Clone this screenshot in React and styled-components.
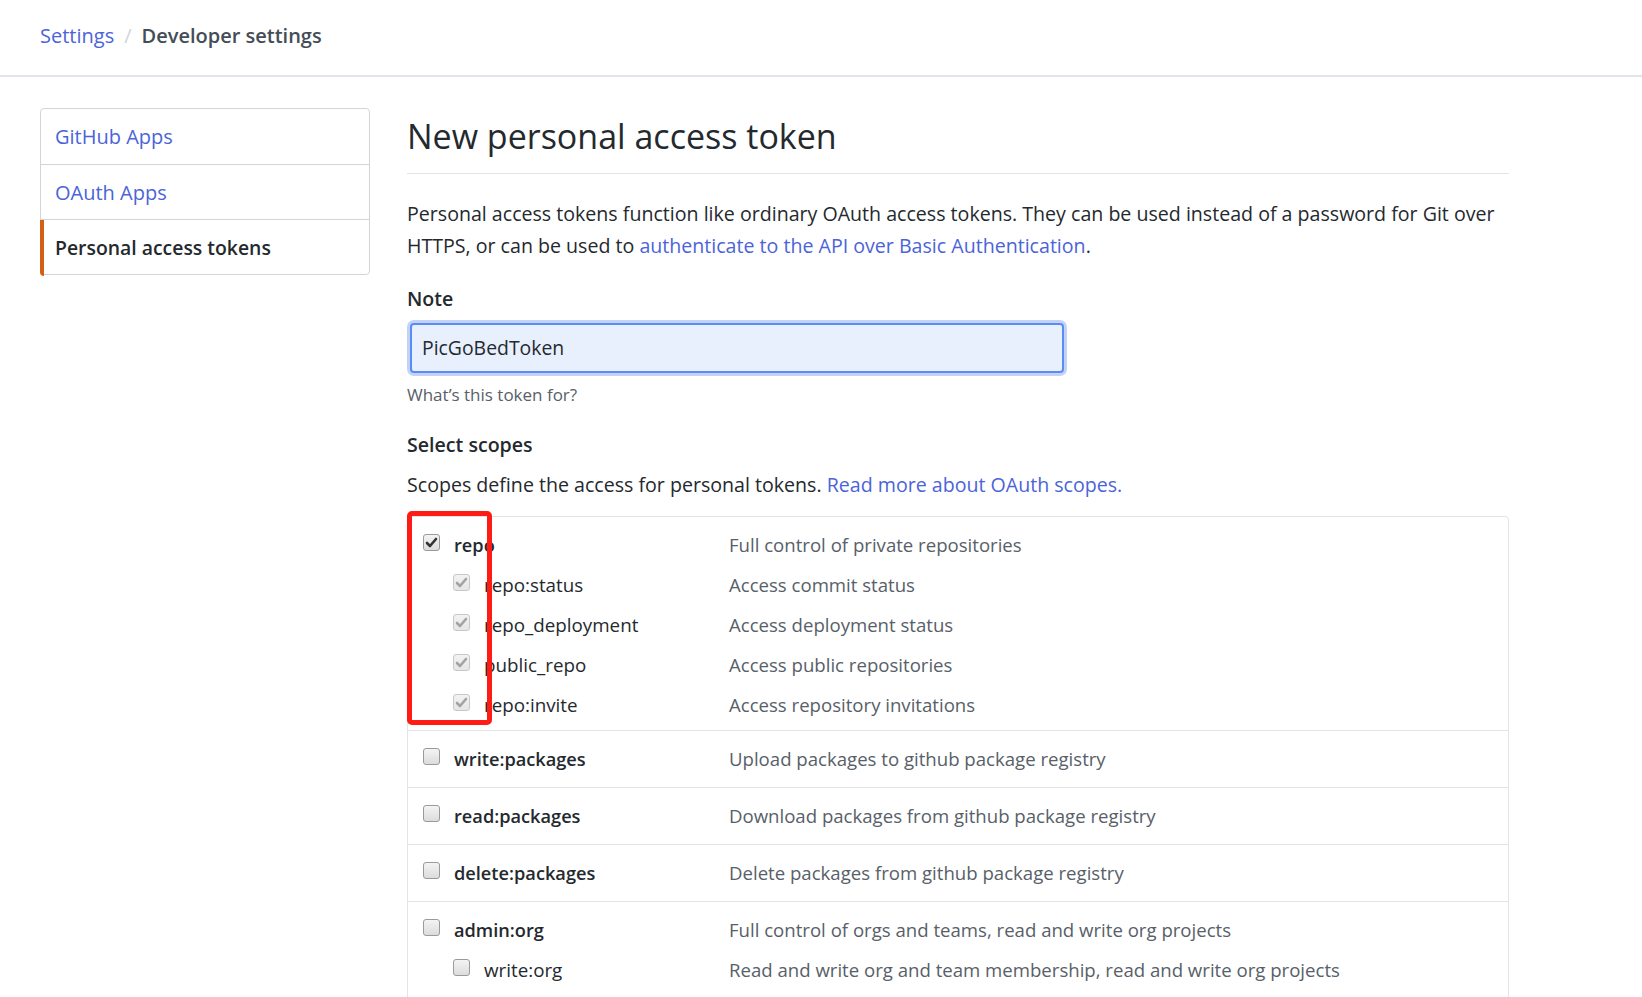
import styled, { createGlobalStyle } from 'styled-components'

const GlobalStyle = createGlobalStyle`
    body {
        margin: 0;
        background: #fff;
        color: #24292e;
        font-family: "Open Sans", "Noto Sans", "Liberation Sans", sans-serif;
        font-size: 19.6px;
    }
    * { box-sizing: border-box; }
`

const Header = styled.header`
    height: 77px;
    border-bottom: 2px solid #e1e4e8;
    display: flex;
    align-items: center;
    padding: 0 40px 4px;
    font-size: 20px;
`

const Crumb = styled.a`
    color: ${p => (p.current ? '#444d56' : '#4b64d9')};
    font-weight: ${p => (p.current ? 600 : 400)};
    text-decoration: none;
`

const Slash = styled.span`
    color: #d1d5da;
    margin: 0 10px;
`

const Page = styled.div`
    display: flex;
    align-items: flex-start;
    gap: 37px;
    padding: 31px 40px 0;
`

const Menu = styled.nav`
    width: 330px;
    flex: none;
    border: 1.5px solid #d1d5da;
    border-radius: 4px;
`

const MenuItem = styled.a`
    position: relative;
    display: flex;
    align-items: center;
    height: 55px;
    padding-left: 14px;
    font-size: ${p => (p.selected ? 19.4 : 20)}px;
    text-decoration: none;
    color: ${p => (p.selected ? '#24292e' : '#4b64d9')};
    font-weight: ${p => (p.selected ? 600 : 400)};
    & + & { border-top: 1.5px solid #d1d5da; }

    &::before {
        content: '';
        display: ${p => (p.selected ? 'block' : 'none')};
        position: absolute;
        left: -1.5px;
        top: 0;
        bottom: -1.5px;
        width: 4px;
        background: #d35f13;
        border-bottom-left-radius: 4px;
    }
`

const Main = styled.main`
    width: 1102px;
    flex: none;
`

const Title = styled.h2`
    margin: 0 0 24px;
    font-size: 34px;
    font-weight: 400;
    line-height: 56px;
    padding-bottom: 9px;
    border-bottom: 1.5px solid #e1e4e8;
`

const Text = styled.p`
    margin: 0;
    line-height: 31.5px;
    margin-top: ${p => p.top || 0}px;
`

const Link = styled.a`
    color: #4b64d9;
    text-decoration: none;
`

const Label = styled.label`
    display: block;
    margin-top: ${p => p.top || 0}px;
    font-weight: 600;
    line-height: 31.5px;
`

const Input = styled.input`
    display: block;
    width: 654px;
    height: 50px;
    margin: 8px 0 0 3px;
    padding: 0 10px;
    font-family: inherit;
    font-size: 19.4px;
    color: #24292e;
    background: #e8f0fe;
    border: 2px solid #5a8cf5;
    border-radius: 4px;
    box-shadow: 0 0 0 3px #c4d2f5;
    outline: none;
`

const Note = styled.p`
    margin: 8px 0 0;
    font-size: 17px;
    line-height: 27px;
    color: #586069;
`

const Scopes = styled.div`
    position: relative;
    margin-top: 15px;
    border: 1.5px solid #e1e4e8;
    border-radius: 4px;
    font-size: 18.6px;
`

const Group = styled.div`
    padding: ${p => (p.nested ? '8px 0 5px' : '8px 0')};
    & + & { border-top: 1.5px solid #e1e4e8; }
`

const Row = styled.div`
    display: grid;
    grid-template-columns: 321px 1fr;
    align-items: center;
    height: 40px;
`

const NameCell = styled.div`
    display: flex;
    align-items: center;
    gap: 14px;
    padding-left: ${p => (p.sub ? 45 : 15)}px;
    font-weight: ${p => (p.sub ? 400 : 600)};
    font-size: ${p => (p.sub ? 18.8 : 18.2)}px;
`

const Desc = styled.span`
    color: #586069;
`

const Box = styled.span`
    width: 17px;
    height: 17px;
    flex: none;
    margin-top: -5px;
    display: flex;
    align-items: center;
    justify-content: center;
    border-radius: 3px;
    border: 1px solid ${p => (p.disabled ? '#c8c8c8' : '#9a9a9a')};
    background: ${p => (p.disabled
        ? 'linear-gradient(#f2f2f2, #e6e6e6)'
        : 'linear-gradient(#f4f4f4, #dcdcdc)')};
    color: ${p => (p.disabled ? '#a3a3a3' : '#333')};
`

const Highlight = styled.div`
    position: absolute;
    left: -1.5px;
    top: -5.5px;
    width: 85px;
    height: 214px;
    border: 5px solid #ff1c14;
    border-radius: 5px;
    pointer-events: none;
`

function CheckBox({ checked, disabled }) {
    return (
        <Box disabled={disabled}>
            {checked && (
                <svg width="13" height="13" viewBox="0 0 13 13">
                    <path d="M2 7 L5 10 L11 3" fill="none" stroke="currentColor" strokeWidth="2.6" strokeLinecap="round" strokeLinejoin="round" />
                </svg>
            )}
        </Box>
    )
}

const groups = [
    {
        name: 'repo', desc: 'Full control of private repositories', checked: true,
        children: [
            ['repo:status', 'Access commit status'],
            ['repo_deployment', 'Access deployment status'],
            ['public_repo', 'Access public repositories'],
            ['repo:invite', 'Access repository invitations'],
        ],
    },
    { name: 'write:packages', desc: 'Upload packages to github package registry' },
    { name: 'read:packages', desc: 'Download packages from github package registry' },
    { name: 'delete:packages', desc: 'Delete packages from github package registry' },
    {
        name: 'admin:org', desc: 'Full control of orgs and teams, read and write org projects',
        children: [
            ['write:org', 'Read and write org and team membership, read and write org projects'],
            ['read:org', 'Read org and team membership, read org projects'],
        ],
    },
]

function ScopeGroup({ group }) {
    const children = group.children || []
    return (
        <Group nested={children.length > 0}>
            <Row>
                <NameCell>
                    <CheckBox checked={group.checked} />
                    {group.name}
                </NameCell>
                <Desc>{group.desc}</Desc>
            </Row>
            {children.map(([name, desc]) => (
                <Row key={name}>
                    <NameCell sub>
                        <CheckBox checked={group.checked} disabled={group.checked} />
                        {name}
                    </NameCell>
                    <Desc>{desc}</Desc>
                </Row>
            ))}
        </Group>
    )
}

export default function App() {
    return (
        <>
            <GlobalStyle />
            <Header>
                <Crumb href="#">Settings</Crumb>
                <Slash>/</Slash>
                <Crumb current>Developer settings</Crumb>
            </Header>
            <Page>
                <Menu>
                    <MenuItem href="#">GitHub Apps</MenuItem>
                    <MenuItem href="#">OAuth Apps</MenuItem>
                    <MenuItem selected>Personal access tokens</MenuItem>
                </Menu>
                <Main>
                    <Title>New personal access token</Title>
                    <Text>
                        Personal access tokens function like ordinary OAuth access tokens. They can be used instead of a password for Git over
                        HTTPS, or can be used to <Link href="#">authenticate to the API over Basic Authentication</Link>.
                    </Text>
                    <Label top={22}>Note</Label>
                    <Input defaultValue="PicGoBedToken" />
                    <Note>What’s this token for?</Note>
                    <Label top={21}>Select scopes</Label>
                    <Text top={9}>
                        Scopes define the access for personal tokens. <Link href="#">Read more about OAuth scopes.</Link>
                    </Text>
                    <Scopes>
                        {groups.map(g => <ScopeGroup key={g.name} group={g} />)}
                        <Highlight />
                    </Scopes>
                </Main>
            </Page>
        </>
    )
}
